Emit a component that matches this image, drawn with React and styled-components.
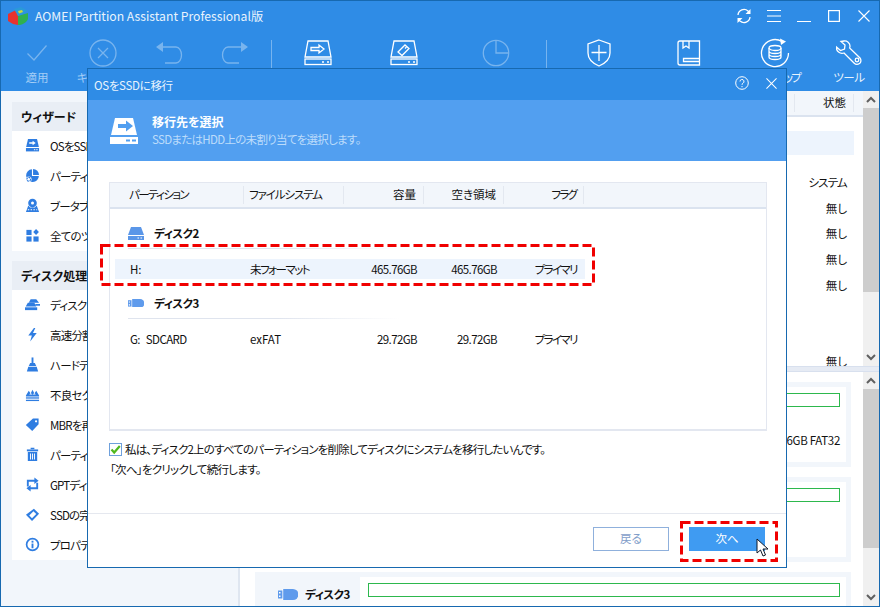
import React from "react";
import styled, { createGlobalStyle } from "styled-components";

const Global = createGlobalStyle`
  html, body { margin: 0; padding: 0; background: #fff; }
  * { box-sizing: border-box; }
  body {
    font-family: "Noto Sans CJK JP", "Noto Sans", "Liberation Sans", sans-serif;
    font-size: 11.5px;
    font-feature-settings: "palt";
    color: #111;
  }
`;

const Win = styled.div`
  position: relative; width: 880px; height: 607px; overflow: hidden;
  border: 1px solid #1769b0; background: #f2f6fb;
  display: flex; flex-direction: column;
`;
const TitleBar = styled.div`
  height: 32px; flex: none; background: #2f8ce6; color: #e8f3fd;
  display: flex; align-items: center; padding: 0 0 2px 6px;
`;
const AppName = styled.span`margin-left: 7px; font-size: 12.2px; white-space: nowrap;`;
const WinControls = styled.div`margin-left: auto; display: flex; align-items: center; height: 100%;`;
const WinBtn = styled.div`width: 30px; display: flex; justify-content: center; align-items: center;`;
const Toolbar = styled.div`
  height: 58px; flex: none; background: #2f8ce6; display: flex; padding-left: 3px;
`;
const ToolItem = styled.div`
  width: ${p => p.$w}px; flex: none; display: flex; flex-direction: column; align-items: center;
  padding-top: 4px;
`;
const ToolIcon = styled.div`
  height: 32px; display: flex; align-items: center; justify-content: center;
  opacity: ${p => (p.$off ? 0.35 : 1)};
`;
const ToolLabel = styled.div`
  white-space: nowrap; line-height: 16px;
  color: ${p => (p.$off ? "#a3cdf6" : "#e8f3fd")};
  letter-spacing: ${p => p.$ls || 0}px;
`;
const ToolDiv = styled.div`
  width: 1px; height: 28px; flex: none; margin: 7px ${p => p.$mr || 0}px 0 ${p => p.$ml || 0}px;
  background: rgba(255,255,255,.35);
`;
const Body = styled.div`flex: 1; min-height: 0; display: flex;`;
const Sidebar = styled.div`
  width: 239px; flex: none; padding: 11px 0 0 11px; display: flex; flex-direction: column; gap: 10px;
  border-right: 2px solid #dfe6f0;
`;
const Panel = styled.div`background: #fff; overflow: hidden;`;
const PanelHead = styled.div`
  height: 29px; background: #e9eef5; padding: 0 0 1px 9px; display: flex; align-items: center;
  font-weight: 700; font-size: 12px; white-space: nowrap;
`;
const NavRow = styled.div`
  height: 30px; padding: 0 0 1px 13px; display: flex; align-items: center; gap: 10px; white-space: nowrap;
  letter-spacing: -.8px;
  svg { flex: none; }
`;
const Main = styled.div`flex: 1; min-width: 0; display: flex; flex-direction: column; background: #fff;`;
const Pane = styled.div`height: ${p => p.$h}px; flex: none; display: flex; overflow: hidden;`;
const PaneInner = styled.div`flex: 1; min-width: 0; overflow: hidden;`;
const TableHead = styled.div`
  height: 26px; background: #f2f6fb; border-bottom: 2px solid #dbe3ef;
  display: flex; justify-content: flex-end; align-items: center; padding-right: 9px;
`;
const StateCol = styled.div`
  width: 60px; height: 18px; border-left: 1px solid #e3e8f0; border-right: 1px solid #e3e8f0;
  text-align: right; padding-right: 7px; line-height: 17px;
`;
const UpperRow = styled.div`
  height: ${p => (p.$sel ? 24 : 25.75)}px; margin-top: ${p => p.$mt || 0}px; margin-right: 9px;
  background: ${p => (p.$sel ? "#edf4fd" : "transparent")};
  display: flex; align-items: center; justify-content: flex-end; padding-right: 7px;
  letter-spacing: ${p => p.$ls || 0}px;
`;
const Scroll = styled.div`
  width: 16px; flex: none; background: #f0f0f0; display: flex; flex-direction: column;
`;
const ScrollArrow = styled.div`height: 17px; flex: none; display: flex; align-items: center; justify-content: center;`;
const Thumb = styled.div`height: ${p => p.$h}px; flex: none; background: #cdcdcd;`;
const Gap = styled.div`flex: 1;`;
const Splitter = styled.div`
  height: 6px; flex: none; background: #e6ebf4; border-top: 1px solid #d8e0ee; border-bottom: 1px solid #d8e0ee;
`;
const CardList = styled.div`padding: 10px 12px 0 15px; display: flex; flex-direction: column; gap: 10px;`;
const Card = styled.div`
  height: 85px; flex: none; background: #f2f6fb; padding: 5px 5px 5px 0; display: flex;
`;
const CardLabel = styled.div`
  width: 105px; flex: none; padding: 9px 0 0 23px; display: flex; align-items: center; align-self: flex-start;
  gap: 7px; font-weight: 700; white-space: nowrap; letter-spacing: -.5px;
`;
const CardBody = styled.div`flex: 1; min-width: 0; background: #fff; padding: 6px 6px 0 8px;`;
const GreenBar = styled.div`height: 14px; border: 1px solid #2db84d;`;
const CardText = styled.div`margin-top: 26px; text-align: right; line-height: 15px; white-space: nowrap; letter-spacing: -.3px;`;

const Dialog = styled.div`
  position: absolute; left: 86px; top: 67px; width: 700px; height: 500px;
  background: #fff; border: 1px solid #1769b0; display: flex; flex-direction: column;
`;
const DlgTitle = styled.div`
  height: 31px; flex: none; background: #2f8ce6; color: #e8f3fd; display: flex; align-items: center;
  padding: 0 9px 0 6px; letter-spacing: -.3px;
`;
const DlgTools = styled.div`margin-left: auto; display: flex; align-items: center; gap: 17px; padding-bottom: 3px;`;
const Banner = styled.div`
  height: 61px; flex: none; background: #529ff0; display: flex; align-items: center; padding-left: 22px; gap: 14px;
`;
const BannerText = styled.div`display: flex; flex-direction: column; gap: 1px; line-height: 16px;`;
const BannerTitle = styled.div`color: #fff; font-weight: 700; font-size: 12px;`;
const BannerSub = styled.div`color: #bcdcfb; letter-spacing: -.7px;`;
const DlgBody = styled.div`flex: 1; min-height: 0; padding: 21px 19px 0 21px; display: flex; flex-direction: column;`;
const TableBox = styled.div`height: 249px; flex: none; border: 1px solid #e3e7f0; border-width: 1px 1px 2px 1px;`;
const HeadRow = styled.div`
  height: 26px; background: #f2f6fb; border-bottom: 2px solid #dbe3ef; display: flex; align-items: center;
`;
const HeadCell = styled.div`
  width: ${p => p.$w}px; flex: none; height: 18px; line-height: 17px; white-space: nowrap;
  text-align: ${p => (p.$right ? "right" : "left")};
  padding: ${p => (p.$right ? "0 7px 0 0" : `0 0 0 ${p.$pl}px`)};
  border-right: 1px solid #e3e8f0;
  letter-spacing: ${p => p.$ls || 0}px;
`;
const DiskHead = styled.div`
  margin: ${p => p.$mt}px 0 0 18px; height: 22px; display: flex; align-items: center; gap: 10px;
  font-weight: 700; letter-spacing: -.5px;
`;
const DiskRule = styled.div`
  height: 1px; width: 272px; margin: 4px 0 0 18px;
  background: linear-gradient(90deg, #dfe4ee 0%, #dfe4ee 55%, #fff 100%);
`;
const DataRow = styled.div`
  height: 20px; margin: ${p => p.$mt}px 181px 0 5px; display: flex; align-items: center;
  background: ${p => (p.$sel ? "#edf4fd" : "transparent")};
`;
const DataCell = styled.div`
  width: ${p => p.$w}px; flex: none; white-space: nowrap; line-height: 18px; padding-bottom: 1px;
  text-align: ${p => (p.$right ? "right" : "left")};
  padding-right: ${p => (p.$right ? 7 : 0)}px;
  padding-left: ${p => p.$pl || 0}px;
  letter-spacing: ${p => p.$ls || 0}px;
`;
const CheckRow = styled.div`margin-top: 10px; display: flex; align-items: center; gap: 3px; line-height: 16px; letter-spacing: -.82px;`;
const Note = styled.div`margin: 4px 0 0 1px; line-height: 16px; letter-spacing: -.7px;`;
const DlgFoot = styled.div`
  height: 54px; flex: none; border-top: 1px solid #e5e8ef; display: flex; justify-content: flex-end;
  padding: 13px 21px 0 0; gap: 20px;
`;
const Btn = styled.div`
  width: 76px; height: 24px; display: flex; align-items: center; justify-content: center; padding-bottom: 2px;
  border: 1px solid ${p => (p.$primary ? "#3f9bf2" : "#8fb0dc")};
  background: ${p => (p.$primary ? "#3f9bf2" : "#fff")};
  color: ${p => (p.$primary ? "#fff" : "#7f9dc9")};
`;
const Mark = styled.svg`
  position: absolute; left: ${p => p.$x}px; top: ${p => p.$y}px; pointer-events: none;
`;

const Ic = ({ s = 16, vb = "0 0 16 16", children }) => (
  <svg width={s} height={s} viewBox={vb}>{children}</svg>
);
const B = "#2f7de1";
const NAV = {
  disk: <g fill={B}><path d="M3.2 1h9.6l2 8.6H1.2z" /><rect x="1" y="10.7" width="14" height="3.6" /><path fill="#fff" d="M4.5 4.4h3.6V2.8L11.4 5.3 8.1 7.8V6.2H4.5z" /><rect x="9.5" y="12" width="1.5" height="1" fill="#fff" /><rect x="12" y="12" width="1.5" height="1" fill="#fff" /></g>,
  pie: <g fill={B}><path d="M8.6 1a6.6 6.6 0 0 1 6.4 6.4H8.6z" /><path d="M7.4 1.2v7.4h7.4A6.7 6.7 0 0 1 8.4 15 6.9 6.9 0 0 1 1.2 8 6.8 6.8 0 0 1 7.4 1.2z" /><circle cx="4" cy="12" r="3" fill="#fff" /><circle cx="4" cy="12" r="2" fill="none" stroke={B} strokeWidth="1.2" strokeDasharray="2 .7" /></g>,
  boot: <g fill={B}><circle cx="8" cy="5.4" r="4.6" /><circle cx="8" cy="5.4" r="1.6" fill="#fff" /><path d="M3.5 8 1 15h14l-2.500-7-2 2H5.500z" /><path d="M3 12h1.500v1H3zM6 12h1.500v1H6zM9 12h1.500v1H9zM12 12h1v1h-1z" fill="#fff" /></g>,
  grid: <g fill={B}><rect x="1.500" y="2" width="5.500" height="5.500" /><rect x="1.500" y="9" width="5.500" height="5.500" /><rect x="9" y="9" width="5.500" height="5.500" /><path d="M11.800 1l3 3.200-3 3.300-3-3.300z" /></g>,
  copy: <g fill={B}><path d="M6 2.500h6l3 3.500H4z" /><path d="M11 7.500h5v1.800h-5z" /><path d="M3 6h7l2 4H.8z" /><rect x="0" y="11" width="13" height="3" /></g>,
  bolt: <path fill={B} d="M9.500 1 3.500 9h3.800L5.500 15.500 12.500 6.500H8.500L11 1z" />,
  broom: <g fill={B}><rect x="7" y=".5" width="2" height="6" /><path d="M5.500 6.500h5L12 9.500H4z" /><path d="M3.500 10.500h9l1.500 5H2z" /></g>,
  bad: <g fill={B}><path d="M1 9 4 4l2 3 2-4 2 4 2-3 3 5v1H1z" /><path d="M4.500 8 6 6.500 8 8l2-1.500L11.500 8z" fill="#fff" /><rect x="1" y="11" width="14" height="1.400" /><rect x="1" y="13.600" width="14" height="1.400" /></g>,
  tag: <path fill={B} fillRule="evenodd" d="M8.500 1.500h6v6.200L7.700 14.800.9 8.500zM11.800 3.400a1.200 1.200 0 1 0 0 2.400 1.200 1.200 0 0 0 0-2.400z" />,
  trash: <g fill={B}><rect x="6" y=".8" width="4" height="1.600" /><rect x="2" y="2.600" width="12" height="2" /><path fillRule="evenodd" d="M3 5.400h10V15H3zM5.400 7v6.400h1V7zM7.500 7v6.400h1V7zM9.600 7v6.400h1V7z" /></g>,
  conv: <g fill="none" stroke={B} strokeWidth="2"><path d="M3 10V4h8" /><path d="M13 6v6H5" /><path fill={B} stroke="none" d="M10 .5 14.500 4 10 7.500zM6 8.500 1.500 12 6 15.500z" /></g>,
  erase: <g fill={B}><path d="M9.500 1.800 15 7.300 7.500 14.800 1 8.300z" /><path d="M9 4.500 12 7.500 7.500 12 4.500 9z" fill="#fff" /></g>,
  info: <g><circle cx="8" cy="8" r="6.300" fill="none" stroke={B} strokeWidth="1.800" /><rect x="7" y="7" width="2" height="5" fill={B} /><rect x="7" y="4" width="2" height="2" fill={B} /></g>,
};
const wiz = [["disk", "OSをSSDに移行"], ["pie", "パーティション回復"], ["boot", "ブータブルメディア作成"], ["grid", "全てのツール"]];
const dsk = [["copy", "ディスクコピー"], ["bolt", "高速分割"], ["broom", "ハードディスク消去"], ["bad", "不良セクタ検査"], ["tag", "MBRを再構築"], ["trash", "パーティション削除"], ["conv", "GPTディスクに変換"], ["erase", "SSDの完全消去"], ["info", "プロパティ"]];

const stroke = { fill: "none", stroke: "#fff", strokeWidth: 1.300 };
const DiskTool = ({ children }) => (
  <svg width="30" height="28" viewBox="0 0 30 28" {...stroke}>
    <path d="M5 2h20l3 16H2z" />
    <rect x="2" y="20" width="26" height="5.500" />
    <path d="M19 23h2M24 23h2" />
    {children}
  </svg>
);
const TOOLS = [
  { w: 66, off: 1, label: "適用", icon: <svg width="22" height="18" viewBox="0 0 22 18" {...stroke}><path d="M1.500 9.500 8 16 20.500 1.500" /></svg> },
  { w: 66, off: 1, label: "キャンセル", icon: <svg width="28" height="28" viewBox="0 0 28 28" {...stroke}><circle cx="14" cy="14" r="13" /><path d="M9 9l10 10M19 9 9 19" /></svg> },
  { w: 66, off: 1, icon: <svg width="28" height="24" viewBox="0 0 28 24" {...stroke}><path d="M4 6h17a5.500 8 0 0 1 0 16H10" /><path fill="#fff" stroke="none" d="M8 1v10L1 6z" /></svg> },
  { w: 66, off: 1, icon: <svg width="28" height="24" viewBox="0 0 28 24" {...stroke}><path d="M24 6H7a5.500 8 0 0 0 0 16h11" /><path fill="#fff" stroke="none" d="M20 1v10l7-5z" /></svg> },
  { div: 1, ml: 3, mr: 3 },
  { w: 86, icon: <DiskTool><path d="M8 8.500h8V6l5 4-5 4v-2.500H8z" /></DiskTool> },
  { w: 86, icon: <DiskTool><path d="M9 13l7-7 4 3.500-7 7z" /><path d="M17.500 8l-1.500 1.500" /></DiskTool> },
  { w: 98, off: 1, icon: <svg width="28" height="28" viewBox="0 0 28 28" {...stroke}><circle cx="14" cy="14" r="12.700" /><path d="M14 1.500V14h12.500" /></svg> },
  { div: 1, ml: 1 },
  { w: 104, icon: <svg width="24" height="28" viewBox="0 0 24 28" {...stroke}><path d="M12 1 23 5v9c0 6-4 10-11 13C5 24 1 20 1 14V5z" /><path d="M12 6v16M4.500 13.500h15" /></svg> },
  { w: 76, icon: <svg width="24" height="26" viewBox="0 0 24 26" {...stroke}><path d="M3 1h19.500v20.500M3 1a2 2 0 0 0-2 2v20a2 2 0 0 0 2 2h19.500v-3.500H6.500v-3h16" /><path d="M6 1v7l3-2 3 2V1" /></svg> },
  { w: 96, ls: -1.7, label: "バックアップ", icon: <svg width="30" height="30" viewBox="0 0 30 30" {...stroke}><path d="M22 3.500A13.500 13.500 0 1 0 28.500 15" /><path fill="#fff" stroke="none" d="M20 .5l6 3-5 3.500z" /><ellipse cx="15" cy="10" rx="6" ry="2.500" /><path d="M9 10v9c0 1.500 2.700 2.500 6 2.500s6-1 6-2.500v-9M9 13c0 1.500 2.700 2.500 6 2.500s6-1 6-2.500M9 16c0 1.500 2.700 2.500 6 2.500s6-1 6-2.500" /></svg> },
  { w: 52, ls: -.4, label: "ツール", icon: <svg width="26" height="26" viewBox="0 0 26 26" {...stroke}><path d="M8 1c3-.500 6 2 6 5 0 .800-.100 1.500-.400 2L24 18c1.500 2 1 4.500-.5 5.500s-4 1-5.500-.5L8 13c-4 1.500-8-2-7.500-6l4 3.500 4-1.500.500-4L5 1.500z" /><circle cx="21" cy="20" r="1.800" /></svg> },
];

const DiskBlue = () => (
  <svg width="16" height="13" viewBox="0 0 16 13">
    <path fill="#5a96e8" d="M3 0h10l3 8H0z" />
    <rect y="9" width="16" height="4" fill="#5a96e8" />
    <rect x="9.500" y="10.500" width="1.500" height="1" fill="#fff" />
    <rect x="12.500" y="10.500" width="1.500" height="1" fill="#fff" />
  </svg>
);
const UsbBlue = ({ w = 20 }) => (
  <svg width={w} height={w * 0.55} viewBox="0 0 20 11">
    <path fill="#5f9bec" d="M5 0h10a5.500 5.500 0 0 1 0 11H5z" />
    <rect y="1.500" width="5" height="8" fill="#5f9bec" />
    <path fill="#fff" d="M1 3h1.500v1.500H1zM1 6.500h1.500v1.500H1zM4.400 0h.8v11h-.8z" />
  </svg>
);

const Sb = ({ thumb }) => (
  <Scroll>
    <ScrollArrow><svg width="10" height="7" viewBox="0 0 10 7"><path d="M1 6 5 2l4 4" fill="none" stroke="#606060" strokeWidth="2" /></svg></ScrollArrow>
    <Thumb $h={thumb} />
    <Gap />
    <ScrollArrow><svg width="10" height="7" viewBox="0 0 10 7"><path d="M1 1l4 4 4-4" fill="none" stroke="#606060" strokeWidth="2" /></svg></ScrollArrow>
  </Scroll>
);

const X = ({ s = 12 }) => (
  <svg width={s} height={s} viewBox="0 0 12 12"><path d="M.5.500l11 11M11.500.500l-11 11" stroke="#fff" strokeWidth="1.100" fill="none" /></svg>
);

export default function App() {
  return (
    <>
      <Global />
      <Win>
        <TitleBar>
          <svg width="21" height="18" viewBox="0 0 21 18">
            <path fill="#2fb04f" d="M11 9l10-3v6c-2 4-6 6-10 6z" />
            <path fill="#e8322e" d="M1 7l8-4 2 6v9L6 17l-5-3z" />
            <path fill="#2a9ad8" d="M7 2l7-2 7 4-10 5z" />
            <path fill="#c7dc3a" d="M11 4l4-1 1 2-4 1.500z" />
          </svg>
          <AppName>AOMEI Partition Assistant Professional版</AppName>
          <WinControls>
            <WinBtn>
              <svg width="16" height="16" viewBox="0 0 16 16" fill="none" stroke="#fff" strokeWidth="1.300">
                <path d="M2 7a6 6 0 0 1 10-4l1.500 1.500M14 9a6 6 0 0 1-10 4l-1.500-1.500" />
                <path fill="#fff" stroke="none" d="M14.500 1v5h-5zM1.500 15v-5h5z" />
              </svg>
            </WinBtn>
            <WinBtn>
              <svg width="14" height="12" viewBox="0 0 14 12" stroke="#fff" strokeWidth="1"><path d="M0 .5h14M0 6h14M0 11.500h14" /></svg>
            </WinBtn>
            <WinBtn>
              <svg width="14" height="12" viewBox="0 0 14 12" stroke="#fff" strokeWidth="1"><path d="M0 11.500h14" /></svg>
            </WinBtn>
            <WinBtn>
              <svg width="12" height="12" viewBox="0 0 12 12" fill="none" stroke="#fff" strokeWidth="1.200"><rect x=".6" y=".6" width="10.800" height="10.800" /></svg>
            </WinBtn>
            <WinBtn><X /></WinBtn>
          </WinControls>
        </TitleBar>
        <Toolbar>
          {TOOLS.map((t, i) =>
            t.div ? <ToolDiv key={i} $ml={t.ml} $mr={t.mr} /> : (
              <ToolItem key={i} $w={t.w}>
                <ToolIcon $off={t.off}>{t.icon}</ToolIcon>
                {t.label && <ToolLabel $off={t.off} $ls={t.ls}>{t.label}</ToolLabel>}
              </ToolItem>
            )
          )}
        </Toolbar>
        <Body>
          <Sidebar>
            <Panel>
              <PanelHead>ウィザード</PanelHead>
              {wiz.map(([k, l]) => <NavRow key={k}><Ic s={15}>{NAV[k]}</Ic>{l}</NavRow>)}
            </Panel>
            <Panel>
              <PanelHead>ディスク処理</PanelHead>
              {dsk.map(([k, l]) => <NavRow key={k}><Ic s={15}>{NAV[k]}</Ic>{l}</NavRow>)}
            </Panel>
          </Sidebar>
          <Main>
            <Pane $h={275}>
              <PaneInner>
                <TableHead><StateCol>状態</StateCol></TableHead>
                <UpperRow $sel $mt={14} />
                <UpperRow $mt={14} $ls={-.8}>システム</UpperRow>
                <UpperRow>無し</UpperRow>
                <UpperRow>無し</UpperRow>
                <UpperRow>無し</UpperRow>
                <UpperRow>無し</UpperRow>
                <UpperRow $mt={50}>無し</UpperRow>
              </PaneInner>
              <Sb thumb={184} />
            </Pane>
            <Splitter />
            <Pane $h={234}>
              <PaneInner>
                <CardList>
                  <Card>
                    <CardLabel />
                    <CardBody><GreenBar /><CardText>465.76GB FAT32</CardText></CardBody>
                  </Card>
                  <Card>
                    <CardLabel />
                    <CardBody><GreenBar /></CardBody>
                  </Card>
                  <Card>
                    <CardLabel><UsbBlue />ディスク3</CardLabel>
                    <CardBody><GreenBar /></CardBody>
                  </Card>
                </CardList>
              </PaneInner>
              <Sb thumb={159} />
            </Pane>
          </Main>
        </Body>

        <Dialog>
          <DlgTitle>
            OSをSSDに移行
            <DlgTools>
              <svg width="14" height="14" viewBox="0 0 14 14" fill="none" stroke="#fff" strokeWidth="1">
                <circle cx="7" cy="7" r="6.300" />
                <path d="M5 5.500a2 2 0 1 1 3 1.700c-.7.400-1 .8-1 1.600" />
                <path d="M7 10v1.200" />
              </svg>
              <X s={11} />
            </DlgTools>
          </DlgTitle>
          <Banner>
            <svg width="28" height="28" viewBox="0 0 28 28">
              <path fill="#fff" d="M5 1h18l4 17H1z" />
              <path fill="#529ff0" d="M8 7h8V3.500L23 9l-7 5.500V11H8z" />
              <rect y="20" width="28" height="7" fill="#fff" />
              <rect x="16" y="22.500" width="4" height="2" fill="#529ff0" />
              <rect x="22" y="22.500" width="4" height="2" fill="#529ff0" />
            </svg>
            <BannerText>
              <BannerTitle>移行先を選択</BannerTitle>
              <BannerSub>SSDまたはHDD上の未割り当てを選択します。</BannerSub>
            </BannerText>
          </Banner>
          <DlgBody>
            <TableBox>
              <HeadRow>
                <HeadCell $w={134} $pl={19} $ls={-1.6}>パーティション</HeadCell>
                <HeadCell $w={100} $pl={5} $ls={-1.1}>ファイルシステム</HeadCell>
                <HeadCell $w={80} $right>容量</HeadCell>
                <HeadCell $w={80} $right>空き領域</HeadCell>
                <HeadCell $w={80} $right $ls={-1.8}>フラグ</HeadCell>
              </HeadRow>
              <DiskHead $mt={13}><DiskBlue />ディスク2</DiskHead>
              <DiskRule />
              <DataRow $sel $mt={10}>
                <DataCell $w={129} $pl={15}>H:</DataCell>
                <DataCell $w={100} $pl={6} $ls={-1.5}>未フォーマット</DataCell>
                <DataCell $w={80} $right $ls={-.6}>465.76GB</DataCell>
                <DataCell $w={80} $right $ls={-.6}>465.76GB</DataCell>
                <DataCell $w={80} $right $ls={-1.6}>プライマリ</DataCell>
              </DataRow>
              <DiskHead $mt={13}><UsbBlue w={16} />ディスク3</DiskHead>
              <DiskRule />
              <DataRow $mt={10}>
                <DataCell $w={129} $pl={15} $ls={-.6}>G:&nbsp;&nbsp;&nbsp;SDCARD</DataCell>
                <DataCell $w={100} $pl={6}>exFAT</DataCell>
                <DataCell $w={80} $right $ls={-.6}>29.72GB</DataCell>
                <DataCell $w={80} $right $ls={-.6}>29.72GB</DataCell>
                <DataCell $w={80} $right $ls={-1.6}>プライマリ</DataCell>
              </DataRow>
            </TableBox>
            <CheckRow>
              <svg width="13" height="13" viewBox="0 0 13 13">
                <rect x=".5" y=".5" width="12" height="12" fill="#fff" stroke="#6ea0dc" />
                <path d="M2.500 6.500 5.200 9.500 10.800 3" fill="none" stroke="#4fb81e" strokeWidth="2.200" />
              </svg>
              私は、ディスク2上のすべてのパーティションを削除してディスクにシステムを移行したいんです。
            </CheckRow>
            <Note>「次へ」をクリックして続行します。</Note>
          </DlgBody>
          <DlgFoot>
            <Btn>戻る</Btn>
            <Btn $primary>次へ</Btn>
          </DlgFoot>
        </Dialog>

        <Mark $x={99} $y={243} width="495" height="42">
          <rect x="1.500" y="1.500" width="492" height="39" fill="none" stroke="#f00000" strokeWidth="3" strokeDasharray="9 4" />
        </Mark>
        <Mark $x={679} $y={520} width="98" height="41">
          <rect x="1.500" y="1.500" width="95" height="38" fill="none" stroke="#f00000" strokeWidth="3" strokeDasharray="9 4" />
        </Mark>
        <Mark $x={755} $y={537} width="13" height="19" viewBox="0 0 13 19">
          <path d="M1 1v14l3.500-3 2.500 6 2.500-1-2.500-6H12z" fill="#fff" stroke="#101828" strokeWidth="1" strokeLinejoin="round" />
        </Mark>
      </Win>
    </>
  );
}
